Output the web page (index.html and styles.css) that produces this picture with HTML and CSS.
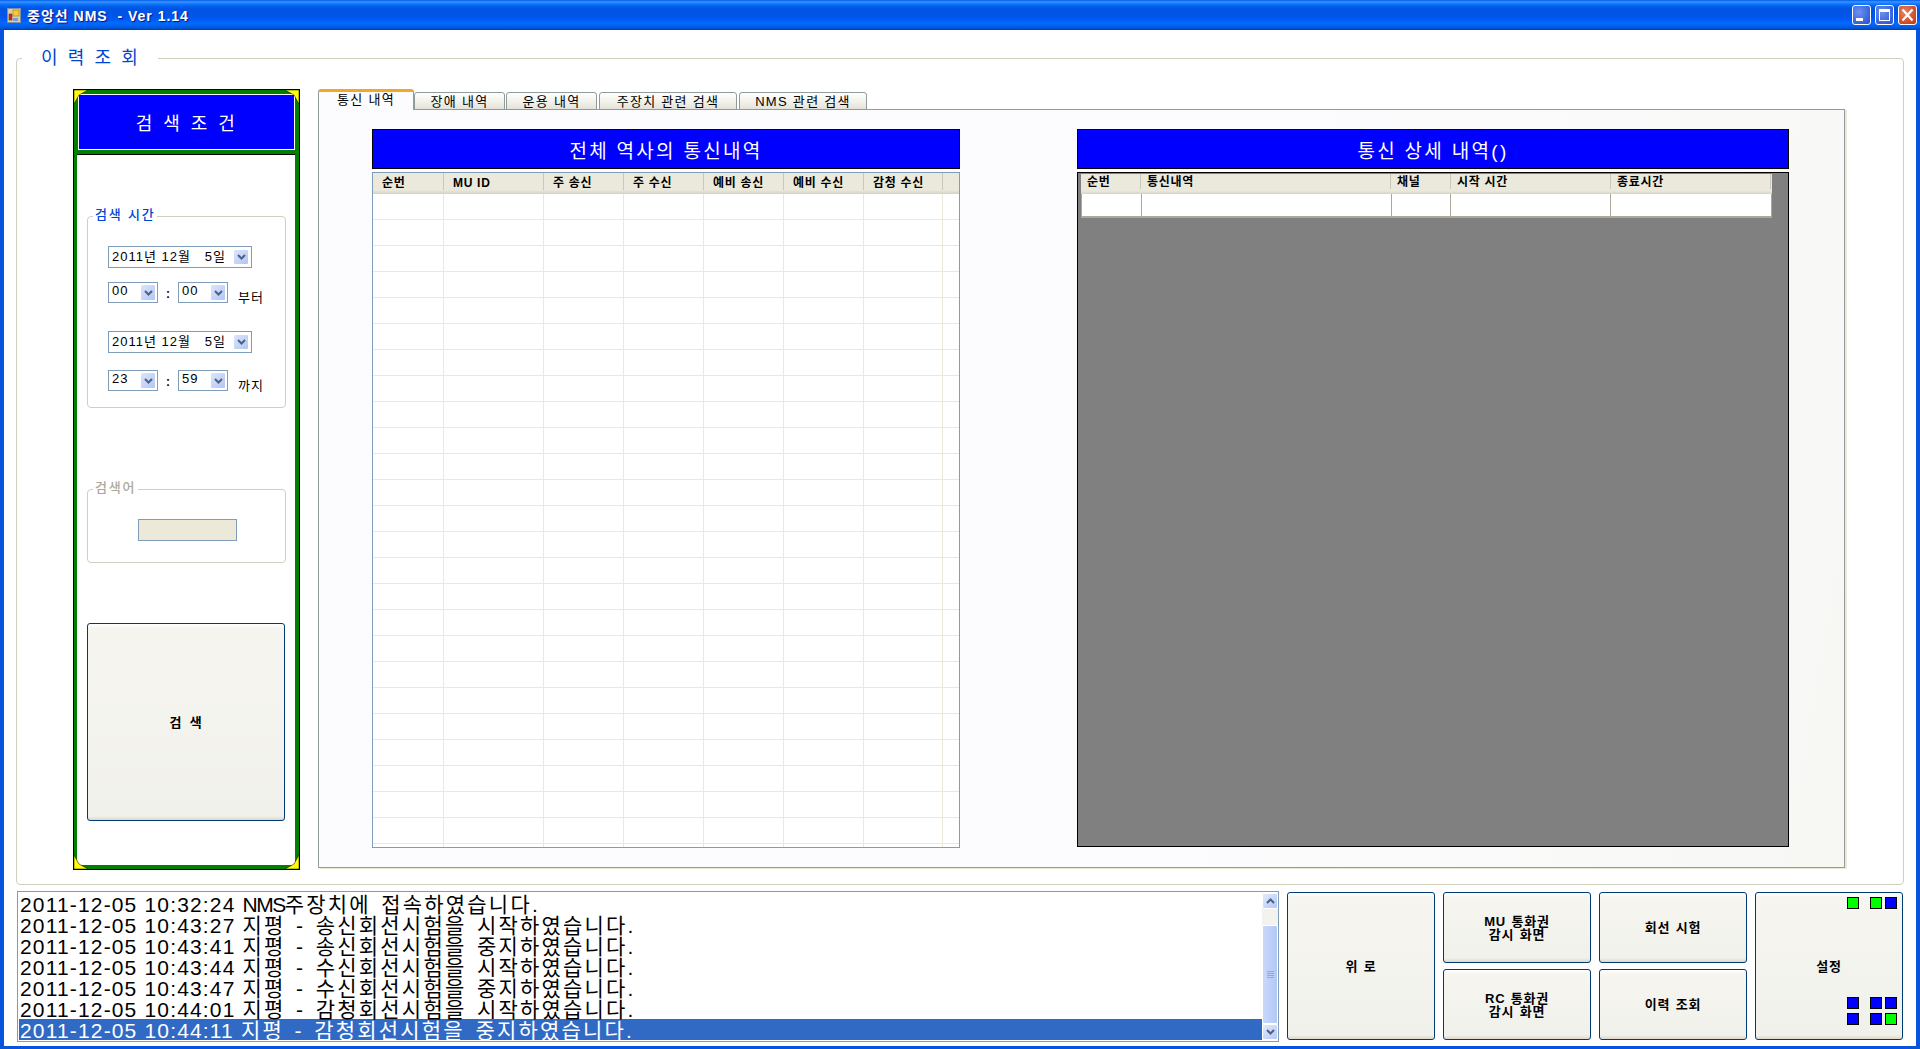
FILE: index.html
```html
<!DOCTYPE html>
<html lang="ko">
<head>
	<meta charset="UTF-8">
	<title>중앙선 NMS - Ver 1.14</title>
	<link rel="stylesheet" href="styles.css">
</head>
<body>
	<div class="titlebar">
		<svg class="app-icon" width="14" height="15" viewBox="0 0 14 15">
			<rect x="0" y="0" width="14" height="15" fill="#d8cfa8"/>
			<path d="M0 .5H14M0 14.500H14M.5 0V15M13.500 0V15" stroke="#7f8fa8"/>
			<rect x="2" y="6" width="3" height="6" fill="#d0281c" stroke="#801810" stroke-width=".5"/>
			<rect x="6" y="2" width="6" height="6" fill="#f7c838" stroke="#a87810" stroke-width=".6"/>
			<rect x="6" y="10" width="5" height="3" fill="#6f9fe0"/>
		</svg>
		<span class="app-title">중앙선 NMS &nbsp;- Ver 1.14</span>
		<div class="win-btns">
			<div class="win-btn"><svg width="19" height="20" viewBox="0 0 19 20"><rect x="4" y="13" width="7" height="3" fill="#fff"/></svg></div>
			<div class="win-btn"><svg width="19" height="20" viewBox="0 0 19 20"><rect x="4.500" y="4.500" width="10" height="11" fill="none" stroke="#fff"/><rect x="4" y="4" width="11" height="3" fill="#fff"/></svg></div>
			<div class="win-btn close"><svg width="19" height="20" viewBox="0 0 19 20"><path d="M4.500 4.500 14.500 15.500M14.500 4.500 4.500 15.500" stroke="#fff" stroke-width="2.200"/></svg></div>
		</div>
	</div>

	<div class="client">
		<div class="main-group">
			<span class="main-title">이 력 조 회</span>

			<!-- 왼쪽 검색 조건 -->
			<div class="search-panel">
				<svg class="corner tl" width="14" height="14" viewBox="0 0 14 14"><polygon points="0,0 14,0 5,5 0,14"/></svg>
				<svg class="corner tr" width="14" height="14" viewBox="0 0 14 14"><polygon points="0,0 14,0 14,14 9,5"/></svg>
				<svg class="corner bl" width="14" height="14" viewBox="0 0 14 14"><polygon points="0,0 5,9 14,14 0,14"/></svg>
				<svg class="corner br" width="14" height="14" viewBox="0 0 14 14"><polygon points="14,0 14,14 0,14 9,9"/></svg>
				<div class="search-head">검 색 조 건</div>
				<div class="search-body">
					<div class="group time-group">
						<span class="group-title">검색 시간</span>
						<div class="date-box">2011년 12월 &nbsp;&nbsp;5일<span class="drop"><svg width="9" height="6" viewBox="0 0 9 6"><path d="M1 1 4.500 4.500 8 1" fill="none" stroke="#4d6185" stroke-width="2"/></svg></span></div>
						<div class="time-row">
							<div class="combo">00<span class="drop"><svg width="9" height="6" viewBox="0 0 9 6"><path d="M1 1 4.500 4.500 8 1" fill="none" stroke="#4d6185" stroke-width="2"/></svg></span></div>
							<span class="colon">:</span>
							<div class="combo">00<span class="drop"><svg width="9" height="6" viewBox="0 0 9 6"><path d="M1 1 4.500 4.500 8 1" fill="none" stroke="#4d6185" stroke-width="2"/></svg></span></div>
							<span class="time-label">부터</span>
						</div>
						<div class="date-box second">2011년 12월 &nbsp;&nbsp;5일<span class="drop"><svg width="9" height="6" viewBox="0 0 9 6"><path d="M1 1 4.500 4.500 8 1" fill="none" stroke="#4d6185" stroke-width="2"/></svg></span></div>
						<div class="time-row last">
							<div class="combo">23<span class="drop"><svg width="9" height="6" viewBox="0 0 9 6"><path d="M1 1 4.500 4.500 8 1" fill="none" stroke="#4d6185" stroke-width="2"/></svg></span></div>
							<span class="colon">:</span>
							<div class="combo">59<span class="drop"><svg width="9" height="6" viewBox="0 0 9 6"><path d="M1 1 4.500 4.500 8 1" fill="none" stroke="#4d6185" stroke-width="2"/></svg></span></div>
							<span class="time-label">까지</span>
						</div>
					</div>
					<div class="group word-group">
						<span class="group-title off">검색어</span>
						<div class="word-input"></div>
					</div>
					<div class="btn search-btn">검 색</div>
				</div>
			</div>

			<!-- 오른쪽 탭 -->
			<div class="tabs">
				<div class="tab-strip">
					<div class="tab active">통신 내역</div>
					<div class="tab t2">장애 내역</div>
					<div class="tab t3">운용 내역</div>
					<div class="tab t4">주장치 관련 검색</div>
					<div class="tab t5">NMS 관련 검색</div>
				</div>
				<div class="tab-pane">
					<div class="list-col left">
						<div class="list-head">전체 역사의 통신내역</div>
						<div class="history">
							<div class="history-cols">
								<span class="h1">순번</span><span class="h2">MU ID</span><span class="h3">주 송신</span><span class="h3">주 수신</span><span class="h3">예비 송신</span><span class="h3">예비 수신</span><span class="h3">감청 수신</span>
							</div>
							<div class="history-body">
								<i class="h1"></i><i class="h2"></i><i class="h3"></i><i class="h3"></i><i class="h3"></i><i class="h3"></i><i class="h3"></i>
							</div>
						</div>
					</div>
					<div class="list-col right">
						<div class="list-head">통신 상세 내역()</div>
						<div class="detail">
							<div class="detail-cols">
								<span class="d1">순번</span><span class="d2">통신내역</span><span class="d3">채널</span><span class="d4">시작 시간</span><span class="d4">종료시간</span>
							</div>
							<div class="detail-row">
								<i class="d1"></i><i class="d2"></i><i class="d3"></i><i class="d4"></i><i class="d4"></i>
							</div>
						</div>
					</div>
				</div>
			</div>
		</div>

		<div class="bottom">
			<div class="log">
				<div class="log-list">
					<div><span class="stamp">2011-12-05 10:32:24 </span><span class="nms">NMS</span>주장치에 접속하였습니다.</div>
					<div><span class="stamp">2011-12-05 10:43:27 </span>지평 - 송신회선시험을 시작하였습니다.</div>
					<div><span class="stamp">2011-12-05 10:43:41 </span>지평 - 송신회선시험을 중지하였습니다.</div>
					<div><span class="stamp">2011-12-05 10:43:44 </span>지평 - 수신회선시험을 시작하였습니다.</div>
					<div><span class="stamp">2011-12-05 10:43:47 </span>지평 - 수신회선시험을 중지하였습니다.</div>
					<div><span class="stamp">2011-12-05 10:44:01 </span>지평 - 감청회선시험을 시작하였습니다.</div>
					<div class="selected"><span class="stamp">2011-12-05 10:44:11 </span>지평 - 감청회선시험을 중지하였습니다.</div>
				</div>
				<div class="scrollbar">
					<div class="sb-arrow"><svg width="9" height="6" viewBox="0 0 9 6"><path d="M1 5 4.500 1.500 8 5" fill="none" stroke="#4d6185" stroke-width="2"/></svg></div>
					<div class="sb-track">
						<div class="sb-thumb"><svg width="7" height="7" viewBox="0 0 7 7"><path d="M0 .5H7M0 2.500H7M0 4.500H7M0 6.500H7" stroke="#8fa9e0"/></svg></div>
					</div>
					<div class="sb-arrow"><svg width="9" height="6" viewBox="0 0 9 6"><path d="M1 1 4.500 4.500 8 1" fill="none" stroke="#4d6185" stroke-width="2"/></svg></div>
				</div>
			</div>
			<div class="btn-grid">
				<div class="btn tall">위 로</div>
				<div class="btn">MU 통화권<br>감시 화면</div>
				<div class="btn">회선 시험</div>
				<div class="btn tall setup">
					설정
					<div class="lamps top"><b class="on"></b><b class="on gap"></b><b></b></div>
					<div class="lamps low"><b></b><b class="gap"></b><b></b><b></b><b class="gap"></b><b class="on"></b></div>
				</div>
				<div class="btn">RC 통화권<br>감시 화면</div>
				<div class="btn">이력 조회</div>
			</div>
		</div>
	</div>
</body>
</html>
```

FILE: styles.css
```css
* {
	box-sizing: border-box;
	margin: 0;
	padding: 0;
}
html, body {
	height: 100%;
	overflow: hidden;
}
body {
	display: flex;
	flex-direction: column;
	font-family: "Liberation Sans", "Noto Sans CJK KR", sans-serif;
	font-size: 12px;
	color: #000;
	background: #0855dd;
}

/* 타이틀바 */
.titlebar {
	height: 30px;
	flex: none;
	display: flex;
	align-items: center;
	padding: 0 3px 0 7px;
	background: linear-gradient(#0058e6 0%, #3a93ff 6%, #127dff 12%, #0262ee 20%, #0054e3 30%, #0055eb 56%, #005bf5 66%, #026afe 76%, #0062ef 86%, #0052d6 94%, #0040ab 100%);
}
.app-icon {
	margin-right: 6px;
}
.app-title {
	color: #fff;
	font-size: 14px;
	font-weight: 700;
	letter-spacing: 1px;
	text-shadow: 1px 1px 1px #0f1089;
}
.win-btns {
	margin-left: auto;
	display: flex;
	gap: 4px;
}
.win-btn {
	width: 19px;
	height: 20px;
	border: 1px solid #fff;
	border-radius: 3px;
	background: radial-gradient(circle at 35% 35%, #6d92ee, #2c57d8 85%);
	position: relative;
}
.win-btn svg {
	position: absolute;
	left: -1px;
	top: -1px;
}
.win-btn.close {
	background: radial-gradient(circle at 35% 35%, #e8835f, #c93d1c 85%);
}

/* 본문 */
.client {
	flex: 1;
	margin: 0 4px 3px;
	background: #fff;
	padding: 28px 12px 0;
	display: flex;
	flex-direction: column;
}
.main-group {
	height: 827px;
	flex: none;
	position: relative;
	border: 1px solid #d0d0bf;
	border-radius: 4px;
	padding: 30px 0 0 56px;
	display: flex;
	align-items: flex-start;
	gap: 18px;
}
.main-title {
	position: absolute;
	left: 5px;
	top: -12px;
	padding: 0 19px;
	background: #fff;
	color: #0046d5;
	font-size: 18px;
	line-height: 22px;
	letter-spacing: 1.600px;
	word-spacing: 2px;
}

/* 검색 조건 패널 */
.search-panel {
	width: 227px;
	height: 781px;
	flex: none;
	position: relative;
	border: 1px solid #000;
	background: #008000;
	padding: 4px 4px 4px 3px;
	display: flex;
	flex-direction: column;
}
.corner {
	position: absolute;
	fill: #ffff00;
	stroke: #000;
	stroke-width: .5;
}
.corner.tl { left: 0; top: 0; }
.corner.tr { right: 0; top: 0; }
.corner.bl { left: 0; bottom: 0; }
.corner.br { right: 0; bottom: 0; }
.search-head {
	height: 56px;
	flex: none;
	margin-left: 1px;
	border: 1px solid #fff;
	background: #0000ff;
	color: #fff;
	font-size: 18px;
	letter-spacing: 2.500px;
	word-spacing: 1px;
	display: flex;
	align-items: center;
	justify-content: center;
}
.search-body {
	flex: 1;
	margin-top: 4px;
	border-top: 1px solid #000;
	background: #fff;
	padding: 61px 9px 0 10px;
}
.group {
	position: relative;
	border: 1px solid #d0d0bf;
	border-radius: 4px;
}
.group-title {
	position: absolute;
	left: 5px;
	top: -11px;
	padding: 0 2px;
	background: #fff;
	color: #0046d5;
	font-weight: 500;
	font-size: 13px;
	line-height: 18px;
	letter-spacing: 1.800px;
}
.group-title.off {
	color: #aca899;
}
.time-group {
	width: 199px;
	height: 192px;
	padding: 29px 0 0 20px;
}
.date-box, .combo, .word-input {
	border: 1px solid #7f9db9;
}
.date-box, .combo {
	position: relative;
	background: #fff;
	padding-left: 3px;
	font-size: 13px;
	letter-spacing: 1px;
}
.date-box {
	width: 144px;
	height: 22px;
	line-height: 20px;
}
.date-box.second {
	margin-top: 28px;
}
.combo {
	width: 50px;
	height: 21px;
	line-height: 16px;
}
.drop {
	position: absolute;
	right: 1px;
	top: 1px;
	bottom: 1px;
	width: 16px;
	border: 1px solid #fff;
	border-radius: 2px;
	background: linear-gradient(135deg, #dde6fb, #b0c6f4);
	display: flex;
	align-items: center;
	justify-content: center;
}
.date-box .drop {
	right: 2px;
	top: 2px;
	bottom: 2px;
}
.time-row {
	height: 21px;
	display: flex;
	align-items: flex-start;
	margin-top: 14px;
}
.time-row.last {
	margin-top: 17px;
}
.colon {
	width: 20px;
	text-align: center;
	font-weight: 700;
	line-height: 24px;
}
.time-label {
	margin-left: 10px;
	margin-top: 7px;
	font-size: 13px;
	line-height: 18px;
	letter-spacing: 1px;
}
.word-group {
	width: 199px;
	height: 74px;
	margin-top: 81px;
	padding: 29px 0 0 50px;
}
.word-input {
	width: 99px;
	height: 22px;
	background: #ece9d8;
}
.btn {
	border: 1px solid #003c74;
	border-radius: 3px;
	background: linear-gradient(#fff 0, #f6f5f0 4px, #f1f1ec calc(100% - 4px), #dcd8c8 100%);
	font-weight: 700;
	font-size: 13px;
	line-height: 13px;
	letter-spacing: .8px;
	word-spacing: 1px;
	text-align: center;
	display: flex;
	align-items: center;
	justify-content: center;
}
.search-btn {
	width: 198px;
	height: 198px;
	margin-top: 60px;
	word-spacing: 3px;
}

/* 탭 */
.tabs {
	width: 1527px;
	height: 779px;
	flex: none;
	display: flex;
	flex-direction: column;
}
.tab-strip {
	height: 21px;
	flex: none;
	display: flex;
	align-items: flex-end;
	position: relative;
	z-index: 1;
	margin-bottom: -1px;
}
.tab {
	height: 18px;
	border: 1px solid #919b9c;
	border-radius: 3px 3px 0 0;
	background: linear-gradient(#fff, #f3f2ec 50%, #e4e3da);
	font-size: 13px;
	letter-spacing: 1.300px;
	text-align: center;
	line-height: 18px;
	width: 91px;
	white-space: nowrap;
}
.tab.active {
	width: 96px;
	height: 21px;
	border-top: 3px solid #f5a623;
	border-bottom: 0;
	background: #fcfcfe;
	line-height: 15px;
}
.tab.t3 { margin-left: 1px; }
.tab.t4 { margin-left: 2px; width: 138px; }
.tab.t5 { margin-left: 2px; width: 128px; }
.tab-pane {
	flex: 1;
	border: 1px solid #919b9c;
	box-shadow: 2px 1px 0 #ece9d8;
	background: linear-gradient(100deg, #fcfcfe 60%, #f7f7f4);
	padding: 19px 0 0 53px;
	display: flex;
	gap: 117px;
}
.list-col.left { width: 588px; }
.list-col.right { width: 712px; }
.list-head {
	height: 40px;
	border: 1px solid #000;
	background: #0000ff;
	color: #fff;
	font-size: 19px;
	letter-spacing: 2.300px;
	display: flex;
	align-items: center;
	justify-content: center;
}

/* 통신내역 그리드 */
.history {
	height: 676px;
	margin-top: 3px;
	border: 1px solid #7f9db9;
	background: #fff;
	display: flex;
	flex-direction: column;
}
.history-cols, .detail-cols {
	height: 21px;
	flex: none;
	display: flex;
	background: linear-gradient(#ebe9dc 0, #ebe9dc 17px, #d6d2c2 100%);
	font-weight: 700;
	font-size: 12px;
	letter-spacing: .7px;
	line-height: 21px;
}
.history-cols span {
	padding-left: 9px;
	border-right: 1px solid #c9c7ba;
	height: 17px;
	flex: none;
}
.history-body {
	flex: 1;
	display: flex;
	background: repeating-linear-gradient(#fff 0, #fff 25px, #ece9d8 25px, #ece9d8 26px);
}
.history-body i {
	flex: none;
	border-right: 1px solid #ece9d8;
}
.h1 { width: 71px; }
.h2 { width: 100px; }
.h3 { width: 80px; }
.history-body i:last-child, .history-cols span:last-child { width: 79px; }

/* 상세 내역 그리드 */
.detail {
	height: 675px;
	margin-top: 3px;
	border: 1px solid #000;
	background: #808080;
	padding: 1px 16px 0 3px;
}
.detail-cols {
	height: 20px;
	line-height: 17px;
}
.detail-cols span {
	padding-left: 6px;
	border-right: 1px solid #c9c7ba;
	height: 15px;
}
.detail-row {
	height: 24px;
	display: flex;
	background: #fff;
	border-bottom: 2px solid #aca899;
	border-left: 1px solid #aca899;
	border-right: 1px solid #aca899;
}
.detail-row i {
	border-right: 1px solid #aca899;
}
.d1 { width: 60px; }
.d2 { width: 250px; }
.d3 { width: 60px; }
.d4 { width: 160px; }
.detail-row .d4:last-child {
	border-right: 0;
}

/* 하단 */
.bottom {
	display: flex;
	align-items: flex-start;
	margin-top: 6px;
	padding-left: 1px;
	gap: 8px;
}
.log {
	width: 1262px;
	height: 151px;
	flex: none;
	border: 1px solid #7f9db9;
	background: #fff;
	padding: 1px 0 1px 1px;
	display: flex;
}
.log-list {
	flex: 1;
	font-size: 21px;
	line-height: 23px;
	letter-spacing: 2.200px;
	word-spacing: 2.500px;
	white-space: nowrap;
}
.log-list div {
	height: 21px;
	padding-left: 1px;
}
.log-list .selected {
	background: #316ac5;
	color: #fff;
}
.stamp {
	letter-spacing: 1.160px;
	word-spacing: 0;
}
.nms {
	letter-spacing: -1.500px;
}
.scrollbar {
	width: 16px;
	flex: none;
	display: flex;
	flex-direction: column;
	background: #f3f3ed;
}
.sb-arrow {
	height: 16px;
	flex: none;
	border: 1px solid #fff;
	border-radius: 2px;
	background: linear-gradient(135deg, #e1eafe, #b4c8f6);
	display: flex;
	align-items: center;
	justify-content: center;
}
.sb-track {
	flex: 1;
	padding-top: 16px;
	display: flex;
}
.sb-thumb {
	flex: 1;
	border: 1px solid #fff;
	border-radius: 2px;
	background: linear-gradient(90deg, #c9d8fb, #b4c8f6);
	display: flex;
	align-items: center;
	justify-content: center;
}
.btn-grid {
	flex: 1;
	margin-top: 1px;
	display: grid;
	grid-template-columns: repeat(4, 148px);
	grid-template-rows: 71px 71px;
	gap: 6px 8px;
}
.btn.tall {
	grid-row: span 2;
}
.setup {
	position: relative;
}
.lamps {
	position: absolute;
	right: 5px;
	display: grid;
	grid-template-columns: 12px 20px 12px;
	gap: 4px 3px;
}
.lamps.top { top: 4px; }
.lamps.low { top: 104px; }
.lamps b {
	height: 12px;
	border: 1px solid #000;
	background: #0000ff;
}
.lamps b.on {
	background: #00ff00;
}
.lamps .gap {
	margin-left: 8px;
	width: 12px;
}
```
